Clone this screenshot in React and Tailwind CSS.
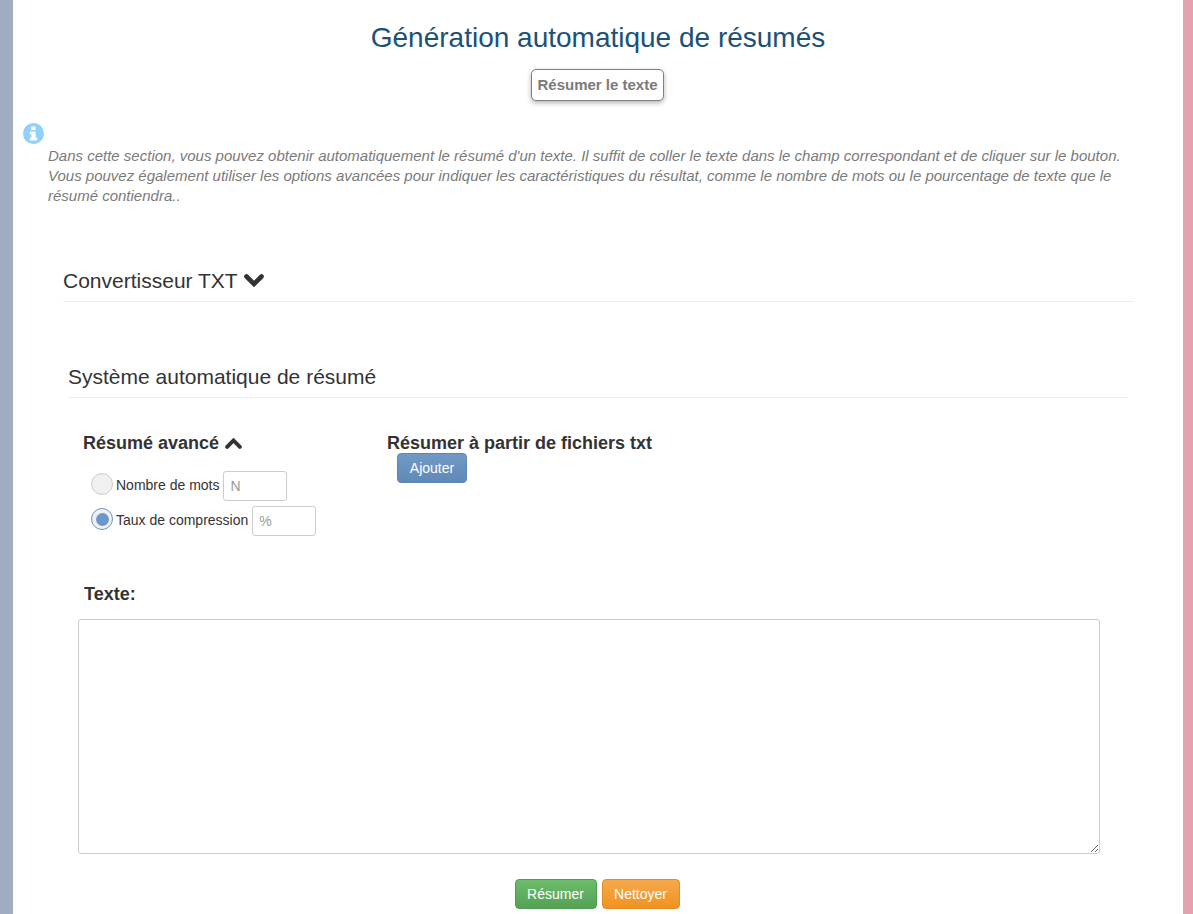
import React from 'react';

const Chevron = ({ up, className }) => (
  <svg viewBox="0 0 20 14" className={className} fill="none" stroke="currentColor" strokeWidth="4.6" strokeLinecap="round" strokeLinejoin="miter">
    <path d={up ? 'M2.5 11.5L10 4L17.5 11.5' : 'M2.5 2.5L10 10L17.5 2.5'} />
  </svg>
);

const InfoIcon = () => (
  <svg viewBox="0 0 21 21" className="h-[21px] w-[21px]">
    <circle cx="10.5" cy="10.5" r="10.5" fill="#90d0fb" />
    <rect x="8.2" y="3.4" width="4.4" height="3.6" rx="0.6" fill="#fff" />
    <path d="M6.8 8.4H12.6V14.6H14.2V17.4H6.8V14.6H8.4V11.2H6.8Z" fill="#fff" />
  </svg>
);

const App = () => {
  return (
    <div className="flex h-[914px] overflow-hidden bg-white font-['Liberation_Sans',Arial,sans-serif] text-[#333]">
      <div className="w-[13px] shrink-0 bg-[#a0acc0]" />

      <main className="flex-1 min-w-0">
        <h1 className="mt-[21px] h-[33px] text-center text-[28px] leading-[34px] font-normal text-[#1b5177]">
          Génération automatique de résumés
        </h1>
        <div className="mt-[15px] flex justify-center pr-[1px]">
          <button className="h-[32px] w-[133px] rounded-[5px] border border-[#808080] bg-white text-[15px] font-bold text-[#7a7a7a] shadow-[0_2px_5px_rgba(0,0,0,0.3)]">
            Résumer le texte
          </button>
        </div>

        <div className="mt-[22px] ml-[10px] h-[21px]">
          <InfoIcon />
        </div>
        <p className="ml-[35px] mr-[60px] mt-[2px] text-[15px] leading-[20px] italic text-[#7a7a7a]">
          Dans cette section, vous pouvez obtenir automatiquement le résumé d'un texte. Il suffit de coller le texte dans le champ correspondant et de cliquer sur le bouton. Vous pouvez également utiliser les options avancées pour indiquer les caractéristiques du résultat, comme le nombre de mots ou le pourcentage de texte que le résumé contiendra..
        </p>

        <div className="ml-[50px] mr-[49px] mt-[58px] border-b border-[#eee] pb-[4px]">
          <h2 className="flex h-[33px] items-center gap-[6px] text-[21px] font-normal text-[#333]">
            Convertisseur TXT <Chevron className="h-[14px] w-[20px]" />
          </h2>
        </div>

        <div className="mx-[55px] mt-[58px] border-b border-[#eee] pb-[4px]">
          <h3 className="h-[33px] text-[21px] leading-[33px] font-normal text-[#333]">Système automatique de résumé</h3>
        </div>

        <div className="mt-[26px] flex">
          <div className="ml-[70px] w-[304px]">
            <h4 className="flex h-[38px] items-center gap-[6px] text-[18px] font-bold text-[#333]">
              Résumé avancé <Chevron up className="h-[12px] w-[17px]" />
            </h4>
            <div className="ml-[8px] mt-[9px] flex h-[30px] items-center text-[14px] text-[#333]">
              <span className="mb-[4px] h-[22px] w-[22px] shrink-0 rounded-full border border-[#ccc] bg-[#f0f0f0]" />
              <span className="mb-[2px] ml-[3px]">Nombre de mots</span>
              <input placeholder="N" className="ml-[4px] h-[30px] w-[64px] rounded-[3px] border border-[#ccc] px-[6px] text-[14px] placeholder:text-[#999]" />
            </div>
            <div className="ml-[8px] mt-[5px] flex h-[30px] items-center text-[14px] text-[#333]">
              <span className="mb-[4px] flex h-[22px] w-[22px] shrink-0 items-center justify-center rounded-full border-[1.5px] border-[#6b95c4] bg-[#f0f0f0]">
                <span className="h-[13px] w-[13px] rounded-full bg-[#6b98cc]" />
              </span>
              <span className="mb-[2px] ml-[3px]">Taux de compression</span>
              <input placeholder="%" className="ml-[4px] h-[30px] w-[64px] rounded-[3px] border border-[#ccc] px-[6px] text-[14px] placeholder:text-[#999]" />
            </div>
          </div>
          <div>
            <h4 className="flex h-[38px] items-center text-[18px] font-bold text-[#333]">Résumer à partir de fichiers txt</h4>
            <button className="ml-[10px] mt-[-9px] block h-[30px] w-[70px] rounded-[4px] border border-[#5a86b5] bg-gradient-to-b from-[#7099c6] to-[#6189b8] text-[14px] text-white">
              Ajouter
            </button>
          </div>
        </div>

        <h4 className="ml-[71px] mt-[42px] h-[33px] text-[18px] leading-[33px] font-bold text-[#333]">Texte:</h4>
        <textarea className="ml-[65px] mt-[8px] block h-[235px] w-[1022px] rounded-[3px] border border-[#ccc]" />

        <div className="mt-[25px] flex justify-center gap-[5px] pr-[2px]">
          <button className="h-[30px] w-[82px] rounded-[4px] border border-[#4f9d4f] bg-gradient-to-b from-[#6cbd6c] to-[#55a155] text-[14px] text-white">
            Résumer
          </button>
          <button className="h-[30px] w-[78px] rounded-[4px] border border-[#e08e26] bg-gradient-to-b from-[#f6a94a] to-[#f0921e] text-[14px] text-white">
            Nettoyer
          </button>
        </div>
      </main>

      <div className="w-[10px] shrink-0 bg-[#e4a3ac]" />
    </div>
  );
};

export default App;
